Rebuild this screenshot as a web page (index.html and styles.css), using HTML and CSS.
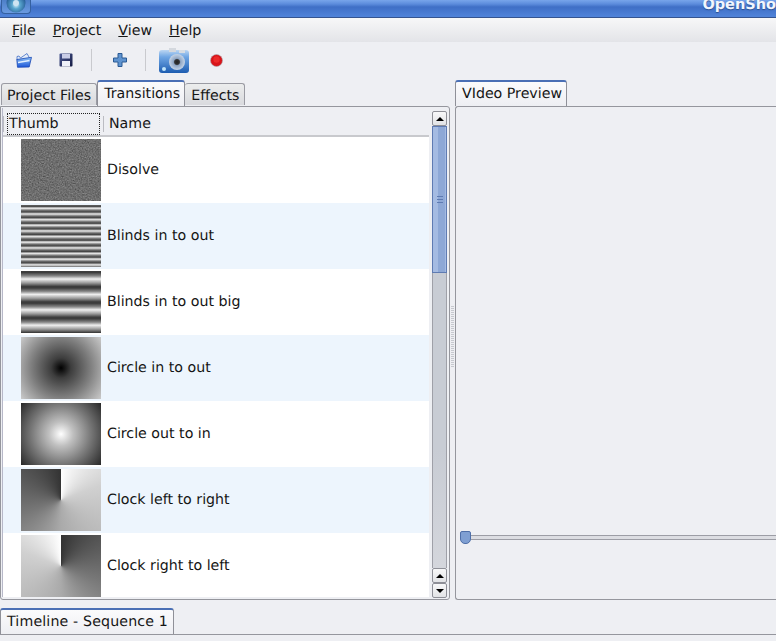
FILE: index.html
```html
<!DOCTYPE html>
<html lang="en">
<head>
<meta charset="utf-8">
<title>OpenShot</title>
<link rel="stylesheet" href="styles.css">
</head>
<body>
<div class="app">
  <header class="titlebar">
    <span class="winbtn"><svg width="28" height="15" viewBox="0 0 28 15"><defs><radialGradient id="disc" cx="50%" cy="60%" r="60%"><stop offset="0" stop-color="#dff2fb"/><stop offset=".35" stop-color="#5aa7cf"/><stop offset="1" stop-color="#1d4f8c"/></radialGradient></defs><circle cx="14" cy="3" r="9.5" fill="url(#disc)"/><circle cx="14" cy="3" r="3" fill="#cfe4f2"/></svg></span>
    <span class="wintitle">OpenSho</span>
  </header>
  <nav class="menubar">
    <span class="menuitem"><u>F</u>ile</span>
    <span class="menuitem"><u>P</u>roject</span>
    <span class="menuitem"><u>V</u>iew</span>
    <span class="menuitem"><u>H</u>elp</span>
  </nav>
  <div class="toolbar">
    <svg class="tool tool-open" width="16" height="16" viewBox="0 0 16 16"><defs><linearGradient id="fold" x1="0" y1="0" x2="0" y2="1"><stop offset="0" stop-color="#8cc0f5"/><stop offset="1" stop-color="#1a55d8"/></linearGradient></defs><path d="M1 4.5l2-.5 1.5 2L11 1.5l2.5 4.5V8H1z" fill="#e3ecf8" stroke="#2a5cc0" stroke-width=".7"/><path d="M.8 7.5l14.7-2.2-2.3 9.7-11.7.3z" fill="url(#fold)" stroke="#1c49b4" stroke-width=".8"/><path d="M2 10.5l11.5-2" stroke="#e2f0ff" stroke-width="1.3"/></svg>
    <svg class="tool tool-save" width="14" height="14" viewBox="0 0 14 14"><defs><linearGradient id="disk" x1="0" y1="0" x2="1" y2="1"><stop offset="0" stop-color="#4c5a94"/><stop offset="1" stop-color="#151b42"/></linearGradient></defs><rect x=".5" y=".5" width="13" height="13" rx="1" fill="url(#disk)"/><rect x="3" y="1" width="8" height="4.5" fill="#c9cde6"/><rect x="3" y="8" width="8" height="5.5" fill="#eef0f8"/></svg>
    <span class="vsep sep-a"></span>
    <svg class="tool tool-add" width="14" height="14" viewBox="0 0 14 14"><path d="M5 .5h4v4.5h4.5v4H9v4.5H5V9H.5V5H5z" fill="#5f93cf" stroke="#2a5a94"/></svg>
    <span class="vsep sep-b"></span>
    <svg class="tool tool-cam" width="30" height="25" viewBox="0 0 30 25"><defs><linearGradient id="cam" x1="0" y1="0" x2="0" y2="1"><stop offset="0" stop-color="#bcd6f2"/><stop offset=".3" stop-color="#6fa6e4"/><stop offset="1" stop-color="#1d5cb0"/></linearGradient><radialGradient id="lens"><stop offset="0" stop-color="#222"/><stop offset=".3" stop-color="#333"/><stop offset=".45" stop-color="#8fa6c4"/><stop offset="1" stop-color="#c4d3e6"/></radialGradient></defs><rect x="0" y="2" width="30" height="23" rx="3" fill="url(#cam)"/><rect x="10" y="0" width="7" height="4" fill="#d4d8de"/><rect x="20" y="2" width="6" height="3" fill="#d8dde3"/><circle cx="18" cy="14" r="8" fill="url(#lens)"/><circle cx="5" cy="21" r="2" fill="#bfe4fa"/></svg>
    <svg class="tool tool-rec" width="13" height="13" viewBox="0 0 13 13"><circle cx="6.5" cy="6.5" r="6" fill="#d8141a" stroke="#a8a8ac" stroke-width=".6"/><circle cx="6.5" cy="5.5" r="3.2" fill="#ec2a2a"/></svg>
  </div>
  <main class="panes">
    <section class="pane-left">
      <div class="tabs">
        <span class="tab">Project Files</span>
        <span class="tab tab-active">Transitions</span>
        <span class="tab">Effects</span>
      </div>
      <div class="frame frame-left">
        <div class="list">
          <div class="list-head">
            <span class="col-thumb"><span class="focus">Thumb</span></span>
            <span class="col-name">Name</span>
          </div>
          <div class="row"><span class="thumb t-dissolve"><svg class="noise" width="80" height="62"><defs><filter id="grain" x="0" y="0" width="100%" height="100%" color-interpolation-filters="sRGB"><feTurbulence type="fractalNoise" baseFrequency="0.7" numOctaves="2" seed="4"/><feColorMatrix values="0.33 0.33 0.33 0 0 0.33 0.33 0.33 0 0 0.33 0.33 0.33 0 0 0 0 0 0 1"/><feComponentTransfer><feFuncR type="linear" slope=".55" intercept=".16"/><feFuncG type="linear" slope=".55" intercept=".16"/><feFuncB type="linear" slope=".55" intercept=".16"/></feComponentTransfer></filter></defs><rect width="80" height="62" filter="url(#grain)"/></svg></span><span class="label">Disolve</span></div>
          <div class="row alt"><span class="thumb t-blinds"></span><span class="label">Blinds in to out</span></div>
          <div class="row"><span class="thumb t-blinds-big"></span><span class="label">Blinds in to out big</span></div>
          <div class="row alt"><span class="thumb t-circle-in"></span><span class="label">Circle in to out</span></div>
          <div class="row"><span class="thumb t-circle-out"></span><span class="label">Circle out to in</span></div>
          <div class="row alt"><span class="thumb t-clock-lr"></span><span class="label">Clock left to right</span></div>
          <div class="row"><span class="thumb t-clock-rl"></span><span class="label">Clock right to left</span></div>
        </div>
        <div class="scrollbar">
          <span class="sb-btn"><i class="up"></i></span>
          <span class="sb-thumb"><span class="grip"></span></span>
          <span class="sb-trough"></span>
          <span class="sb-btn"><i class="up"></i></span>
          <span class="sb-btn"><i class="down"></i></span>
        </div>
      </div>
    </section>
    <div class="splitter"><span class="dots"></span></div>
    <section class="pane-right">
      <div class="tabs tabs-right">
        <span class="tab tab-active">VIdeo Preview</span>
      </div>
      <div class="frame frame-right">
        <div class="preview"></div>
        <div class="seek"><span class="seek-knob"></span><span class="seek-line"></span></div>
      </div>
    </section>
  </main>
  <footer class="bottom">
    <div class="tabs tabs-bottom">
      <span class="tab tab-active tab-time">Timeline - Sequence 1</span>
    </div>
    <div class="bottom-body"><span class="mini m1"></span><span class="mini m2"></span></div>
  </footer>
</div>
</body>
</html>
```
FILE: styles.css
```css
html, body { margin: 0; padding: 0; height: 100%; overflow: hidden; }
body { background: #eeeff3; font-family: "DejaVu Sans", sans-serif; font-size: 14.2px; color: #151515; text-rendering: geometricPrecision; }
.app { display: flex; flex-direction: column; width: 776px; height: 641px; overflow: hidden; }

.titlebar { flex: 0 0 18px; box-sizing: border-box; display: flex; justify-content: space-between; overflow: hidden; background: linear-gradient(#78a5ea 0, #5c8cdc 4px, #3f6fc6 7px, #4f82d8 16px); border-bottom: 1px solid #35548f; }
.winbtn { display: block; width: 28px; height: 13px; margin-left: 1px; background: linear-gradient(#4d7fc8, #6a9ae0); border: 1px solid #35609f; border-top: 0; border-radius: 0 0 4px 4px; overflow: hidden; }
.winbtn svg { display: block; }
.wintitle { font-weight: 700; color: #f2f6fd; font-size: 14.5px; line-height: 11px; white-space: nowrap; text-shadow: 0 1px 1px #2c4f90; }

.menubar { flex: 0 0 24px; min-height: 0; display: flex; align-items: flex-start; overflow: hidden; background: linear-gradient(#f7f7f8, #e3e4e8); padding-left: 12px; gap: 17px; }
.menuitem { line-height: 26px; }

.toolbar { flex: 0 0 38px; display: flex; align-items: center; background: #eeeff3; padding-left: 16px; box-sizing: border-box; padding-bottom: 2px; }
.tool { display: block; flex: none; }
.tool-save { margin-left: 27px; }
.vsep { width: 1px; height: 22px; background: #c9cace; flex: none; }
.sep-a { margin-left: 18px; }
.tool-add { margin-left: 21px; }
.sep-b { margin-left: 18px; }
.tool-cam { margin-left: 13px; }
.tool-rec { margin-left: 21px; }

.panes { flex: 0 0 520px; min-height: 0; display: flex; }
.pane-left { flex: 0 0 450px; min-height: 0; display: flex; flex-direction: column; }
.splitter { flex: 0 0 5px; position: relative; }
.dots { position: absolute; left: 1px; top: 226px; width: 3px; height: 62px; background: repeating-linear-gradient(#c6c8ce 0 1px, transparent 1px 2px); }
.pane-right { flex: 1; min-height: 0; display: flex; flex-direction: column; min-width: 0; }

.tabs { flex: 0 0 25px; display: flex; align-items: flex-start; padding-left: 1px; box-sizing: border-box; position: relative; z-index: 1; }
.tab { display: block; box-sizing: border-box; height: 22px; margin-top: 3px; line-height: 24px; padding: 0 5px; background: linear-gradient(#eceded, #d9dade); border: 1px solid #9a9ba3; border-bottom: 0; border-radius: 3px 3px 0 0; white-space: nowrap; overflow: hidden; }
.tab + .tab { border-left: 0; }
.tab-active + .tab { padding-left: 6px; }
.tab + .tab-active, .tab-active { height: 26px; margin-top: 0; line-height: 24px; background: linear-gradient(#fbfbfc, #eeeff3); border: 1px solid #8f9098; border-top: 2px solid #4a6fb5; border-bottom: 0; padding: 0 4px 0 6px; }

.frame { flex: 1; box-sizing: border-box; border: 1px solid #95969d; min-height: 0; overflow: hidden; }
.frame-left { display: flex; border-radius: 0 3px 3px 3px; background: #eeeff3; padding: 1px 0 0 1px; }
.list { flex: 0 0 426px; min-height: 0; background: #fff; overflow: hidden; border-left: 1px solid #b7b8c8; margin-bottom: 2px; }
.list-head { display: flex; height: 29px; box-sizing: border-box; background: #eeeff3; border-bottom: 2px solid #c8c9cd; align-items: flex-end; }
.col-thumb { flex: 0 0 100px; height: 22px; box-sizing: border-box; padding-left: 4px; position: relative; }
.col-thumb::before, .col-name::before { content: ""; position: absolute; left: 0; top: 3px; bottom: 3px; width: 1px; background: #bbbcc2; }
.focus { display: block; width: 93px; height: 22px; box-sizing: border-box; line-height: 20px; padding-left: 1px; outline: 1px dotted #222; outline-offset: -1px; border: 1px solid transparent; }
.col-name { flex: 1; height: 22px; line-height: 22px; position: relative; padding-left: 6px; }
.row { display: flex; align-items: center; height: 66px; }
.row.alt { background: #edf5fd; }
.thumb { display: block; flex: 0 0 80px; height: 62px; margin-left: 18px; overflow: hidden; }
.label { margin-left: 6px; white-space: nowrap; }
.noise { display: block; }
.t-dissolve { background: #6b6b6b; }
.t-blinds { background: repeating-linear-gradient(#666 0, #444 1.4px, #bbb 2.6px, #e8e8e8 3.4px, #a8a8a8 4.4px, #666 5.65px); }
.t-blinds-big { background: repeating-linear-gradient(#3c3c3c 0, #3c3c3c 1.5px, #888 5px, #f0f0f0 8px, #999 12px, #3c3c3c 15.4px); }
.t-circle-in { background: radial-gradient(circle at 50% 50%, #000 0, #3d3d3d 10px, #808080 30px, #c8c8c8 50px); }
.t-circle-out { background: radial-gradient(circle at 50% 50%, #fff 0, #c0c0c0 12px, #777 30px, #2a2a2a 50px); }
.t-clock-lr { background: conic-gradient(from 0deg at 50% 50%, #fff 0deg, #d0d0d0 70deg, #aaa 180deg, #777 250deg, #333 360deg); }
.t-clock-rl { background: conic-gradient(from 0deg at 50% 50%, #333 0deg, #777 110deg, #aaa 180deg, #d0d0d0 290deg, #fff 360deg); }

.scrollbar { flex: 0 0 15px; margin: 3px 0 1px 3px; display: flex; flex-direction: column; }
.sb-btn { flex: 0 0 15px; box-sizing: border-box; background: linear-gradient(#f8f8f9, #e2e3e6); border: 1px solid #8e8f97; border-radius: 2px; display: flex; align-items: center; justify-content: center; }
.sb-btn i { display: block; width: 0; height: 0; border-left: 4px solid transparent; border-right: 4px solid transparent; }
.sb-btn i.up { border-bottom: 4px solid #000; }
.sb-btn i.down { border-top: 4px solid #000; }
.sb-thumb { flex: 0 0 147px; box-sizing: border-box; border: 1px solid #5f7bb2; background: linear-gradient(90deg, #a5bbe2 0 5px, #8ea8d6 5px 12px, #a5bbe2 12px); display: flex; align-items: center; justify-content: center; }
.grip { display: block; width: 6px; height: 7px; background: repeating-linear-gradient(#5f7bb2 0 1px, transparent 1px 3px); margin-top: -1px; }
.sb-trough { flex: 1; background: linear-gradient(#c8ccd4, #c8ccd4 60%, #d4d6dc); border-left: 1px solid #9fa0a8; border-right: 1px solid #9fa0a8; }

.frame-right { border-right: 0; border-radius: 3px 0 0 3px; display: flex; flex-direction: column; }
.preview { flex: 1; }
.seek { flex: 0 0 17px; display: flex; align-items: center; padding-left: 4px; margin-bottom: 53px; }
.seek-knob { display: block; flex: none; width: 11px; height: 13px; box-sizing: border-box; background: #7f9fd2; border: 1px solid #4f6fa8; border-radius: 2px 2px 5px 5px; }
.seek-line { flex: 1; height: 5px; box-sizing: border-box; border-top: 1px solid #9c9da5; border-bottom: 1px solid #9c9da5; background: #dcdde2; }
.tabs-right { padding-left: 0; }

.bottom { flex: 1; min-height: 0; margin-top: 8px; display: flex; flex-direction: column; }
.tabs-bottom { padding-left: 0; }
.tab.tab-time { padding: 0 5px 0 6px; letter-spacing: .14px; }
.bottom-body { flex: 1; border-top: 1px solid #95969d; position: relative; }
.mini { position: absolute; top: 6px; height: 12px; box-sizing: border-box; border: 1px solid #9a9ba3; border-radius: 4px 4px 0 0; background: #e4e5e9; }
.m1 { left: 60px; width: 42px; }
.m2 { left: 186px; width: 42px; }
```
